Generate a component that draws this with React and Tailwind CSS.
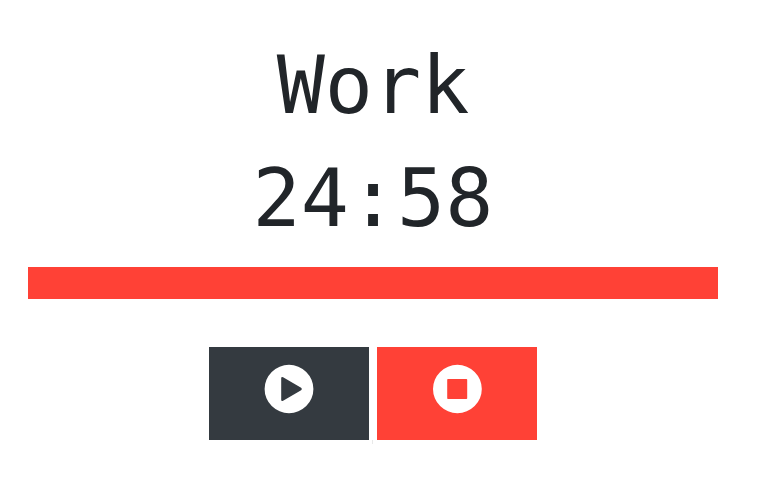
function PlayIcon() {
  return (
    <svg viewBox="0 0 50 50" className="size-[50px]" aria-hidden="true">
      <path
        fill="currentColor"
        fillRule="evenodd"
        d="M25 .8a24.4 24.2 0 1 1 0 48.4a24.4 24.2 0 1 1 0-48.4ZM17.2 14.3V35.7Q17.2 37.8 19.1 36.8L37.1 26.2Q38.8 25 37.1 23.8L19.1 13.2Q17.2 12.2 17.2 14.3Z"
      />
    </svg>
  );
}

function StopIcon() {
  return (
    <svg viewBox="0 0 50 50" className="size-[50px]" aria-hidden="true">
      <path
        fill="currentColor"
        fillRule="evenodd"
        d="M25.4 .8a24.4 24.2 0 1 1 0 48.4a24.4 24.2 0 1 1 0-48.4ZM16 15h18.4q.8 0 .8.8v18.4q0 .8-.8.8H16q-.8 0-.8-.8V15.8q0-.8.8-.8Z"
      />
    </svg>
  );
}

export default function App() {
  return (
    <main className="bg-white pt-[29px] pr-[52px] pb-11 pl-7 text-center text-[#212529]">
      <h1 className="font-['DejaVu_Sans_Mono',monospace] text-[80px] leading-[113px]">Work</h1>
      <p className="font-['DejaVu_Sans_Mono',monospace] text-[80px] leading-[113px]" role="timer">24:58</p>
      <div className="mt-3 h-8 bg-[#ff4136]" role="progressbar" aria-label="Time left" />
      <div className="relative mt-12 flex justify-center gap-2">
        <button type="button" aria-label="Start" className="flex h-[93px] w-40 justify-center bg-[#343a40] pt-[17px] text-white">
          <PlayIcon />
        </button>
        <button type="button" aria-label="Stop" className="flex h-[93px] w-40 justify-center bg-[#ff4136] pt-[17px] text-white">
          <StopIcon />
        </button>
        <span className="absolute top-full left-1/2 h-1 w-px -translate-x-px bg-[#e9e9e9]" aria-hidden="true" />
      </div>
    </main>
  );
}
